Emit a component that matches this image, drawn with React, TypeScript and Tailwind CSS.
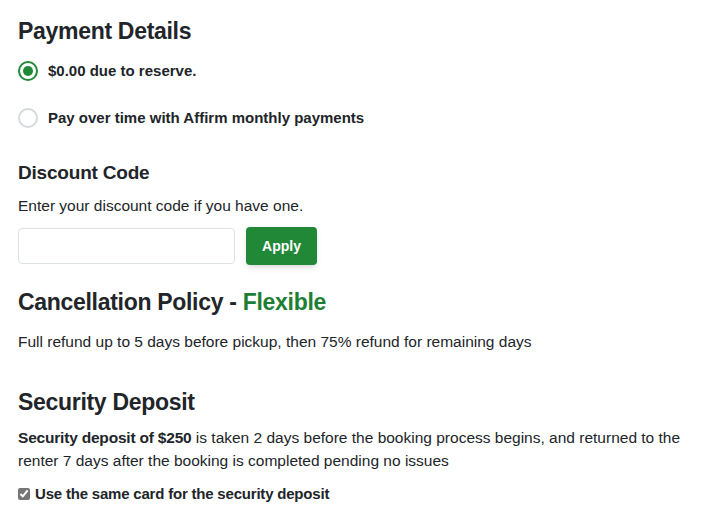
import { useState } from "react";

const font = { fontFamily: '"Liberation Sans", Arial, sans-serif' };

const App = () => {
  const [plan, setPlan] = useState("reserve");
  const [sameCard, setSameCard] = useState(true);

  return (
    <div className="min-h-screen bg-white px-[18px] pt-[16px] text-[#212529]" style={font}>
      {/* Payment */}
      <h2 className="text-[23px] font-bold leading-[30px] tracking-[-0.3px]">Payment Details</h2>

      <div className="mt-[14px] flex flex-col gap-[24px]">
        <label className="flex items-center gap-[10px] cursor-pointer">
          <span
            onClick={() => setPlan("reserve")}
            className={`w-[20px] h-[20px] rounded-full border-2 flex items-center justify-center ${
              plan === "reserve" ? "border-[#218838]" : "border-[#d6d9dc]"
            }`}
          >
            {plan === "reserve" && <span className="w-[10px] h-[10px] rounded-full bg-[#218838]" />}
          </span>
          <span className="text-[15px] font-bold">$0.00 due to reserve.</span>
        </label>
        <label className="flex items-center gap-[10px] cursor-pointer">
          <span
            onClick={() => setPlan("affirm")}
            className={`w-[20px] h-[20px] rounded-full border-2 flex items-center justify-center ${
              plan === "affirm" ? "border-[#218838]" : "border-[#d6d9dc]"
            }`}
          >
            {plan === "affirm" && <span className="w-[10px] h-[10px] rounded-full bg-[#218838]" />}
          </span>
          <span className="text-[15px] font-bold">Pay over time with Affirm monthly payments</span>
        </label>
      </div>

      {/* Discount */}
      <h3 className="mt-[31px] text-[19px] font-bold leading-[26px] tracking-[-0.2px]">Discount Code</h3>
      <p className="mt-[10px] text-[15.5px] leading-[20px]">Enter your discount code if you have one.</p>
      <div className="mt-[11px] flex items-center gap-[11px]">
        <input className="w-[217px] h-[36px] rounded-[4px] border border-[#dde2e4] px-3 text-[15px] outline-none" />
        <button className="h-[38px] w-[71px] rounded-[4px] bg-[#218838] text-white text-[14px] font-bold shadow-md">
          Apply
        </button>
      </div>

      {/* Cancellation */}
      <h2 className="mt-[22px] text-[23px] font-bold leading-[30px] tracking-[-0.3px]">
        Cancellation Policy - <span className="text-[#1e7e34]">Flexible</span>
      </h2>
      <p className="mt-[15px] text-[15.5px] leading-[20px]">
        Full refund up to 5 days before pickup, then 75% refund for remaining days
      </p>

      {/* Deposit */}
      <h2 className="mt-[35px] text-[23px] font-bold leading-[30px] tracking-[-0.3px]">Security Deposit</h2>
      <p className="mt-[9px] text-[15.5px] leading-[23px]">
        <b className="tracking-[-0.2px]">Security deposit of $250</b> is taken 2 days before the booking process
        begins, and returned to the renter 7 days after the booking is completed pending no issues
      </p>
      <label className="mt-[11px] flex items-center gap-[5px] text-[15px] font-bold tracking-[-0.2px]">
        <input
          type="checkbox"
          checked={sameCard}
          onChange={(e) => setSameCard(e.target.checked)}
          className="w-[12px] h-[12px] accent-[#767676]"
        />
        Use the same card for the security deposit
      </label>
    </div>
  );
};

export default App;
